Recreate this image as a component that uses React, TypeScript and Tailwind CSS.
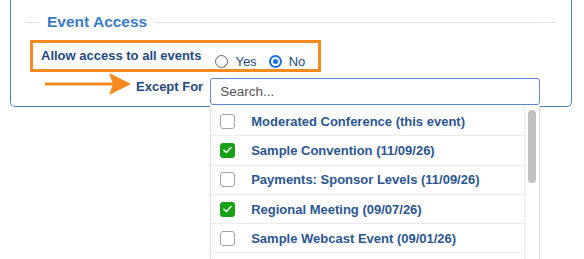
import { useState } from "react";

type EventItem = { label: string; checked: boolean };

const EVENTS: EventItem[] = [
  { label: "Moderated Conference (this event)", checked: false },
  { label: "Sample Convention (11/09/26)", checked: true },
  { label: "Payments: Sponsor Levels (11/09/26)", checked: false },
  { label: "Regional Meeting (09/07/26)", checked: true },
  { label: "Sample Webcast Event (09/01/26)", checked: false },
];

function Radio({ checked }: { checked: boolean }) {
  if (checked) {
    return (
      <span className="flex h-[13px] w-[13px] items-center justify-center rounded-full border-2 border-[#1a6fe8] bg-white">
        <span className="h-[5px] w-[5px] rounded-full bg-[#1a6fe8]" />
      </span>
    );
  }
  return <span className="h-[13px] w-[13px] rounded-full border border-[#6b6b6b] bg-white" />;
}

function Checkbox({ checked }: { checked: boolean }) {
  if (checked) {
    return (
      <span className="flex h-[15px] w-[15px] items-center justify-center rounded-[3px] bg-[#17a117]">
        <svg width="9" height="8" viewBox="0 0 9 8" fill="none">
          <path d="M1 4.3 3.4 6.5 8 1.5" stroke="#e9f7e9" strokeWidth="1.6" strokeLinecap="round" strokeLinejoin="round" />
        </svg>
      </span>
    );
  }
  return <span className="h-[15px] w-[15px] rounded-[3px] border border-[#a3a3a3] bg-white" />;
}

function Arrow() {
  return (
    <svg width="86" height="22" viewBox="0 0 86 22" className="-mt-[5px] shrink-0">
      <path d="M0 11H68" stroke="#f58b1f" strokeWidth="3" />
      <path d="M64 0 86 11 64 22 68 11Z" fill="#f58b1f" />
    </svg>
  );
}

export default function App() {
  const [allowAll, setAllowAll] = useState(false);
  const [events, setEvents] = useState(EVENTS);

  const toggle = (i: number) =>
    setEvents((list) => list.map((e, j) => (j === i ? { ...e, checked: !e.checked } : e)));

  return (
    <div className="h-[259px] overflow-hidden bg-white pl-[10px] pr-[12px] font-['Liberation_Sans',Arial,sans-serif]">
      <div className="h-[107px] rounded-b-[5px] border-x border-b border-[#4a86c6] px-[14px] pt-[13px]">
        <div className="flex h-[18px] items-center">
          <span className="h-px w-[15px] bg-[#dfe5ec]" />
          <span className="px-[7px] text-[15.5px] font-bold leading-[18px] text-[#3a7dc2]">Event Access</span>
          <span className="h-px flex-1 bg-[#dfe5ec]" />
        </div>

        <div className="ml-[5px] mt-[9px] flex h-[32px] w-[291px] items-start border-[3px] border-[#f58b1f] pl-[8px]">
          <span className="mt-[5px] text-[13px] font-bold leading-[15px] text-[#1f4a7d]">Allow access to all events</span>
          <button type="button" onClick={() => setAllowAll(true)} className="ml-[14px] mt-[11px] flex items-center gap-[7px]">
            <Radio checked={allowAll} />
            <span className="text-[13px] leading-[15px] text-[#1f4a7d]">Yes</span>
          </button>
          <button type="button" onClick={() => setAllowAll(false)} className="ml-[12px] mt-[11px] flex items-center gap-[7px]">
            <Radio checked={!allowAll} />
            <span className="text-[13px] leading-[15px] text-[#1f4a7d]">No</span>
          </button>
        </div>

        <div className="ml-[20px] mt-[6px] flex items-start">
          <Arrow />
          <span className="ml-[5px] mt-px text-[13px] font-bold leading-[15px] text-[#1f4a7d]">Except For</span>
          <div className="relative ml-[7px]">
            <input
              placeholder="Search..."
              className="h-[27px] w-[330px] rounded-[3px] border border-[#5d88d4] pl-[9px] text-[13.5px] text-[#333] outline-none placeholder:text-[#555]"
            />
            <div className="absolute left-0 top-full z-10 mt-px flex h-[160px] w-[330px] border-x border-[#dcdcdc] bg-white">
              <ul className="flex-1 pt-px">
                {events.map((e, i) => (
                  <li
                    key={e.label}
                    onClick={() => toggle(i)}
                    className="flex h-[29.3px] cursor-pointer items-center border-b border-[#ececec] pl-[9px]"
                  >
                    <Checkbox checked={e.checked} />
                    <span className="ml-[16px] text-[13px] font-bold leading-[15px] text-[#2b5690]">{e.label}</span>
                  </li>
                ))}
              </ul>
              <div className="w-[15px] border-l border-[#ececec] pl-[3px] pt-[4px]">
                <div className="h-[73px] w-[8px] rounded-full bg-[#c1c1c1]" />
              </div>
            </div>
          </div>
        </div>
      </div>
    </div>
  );
}
